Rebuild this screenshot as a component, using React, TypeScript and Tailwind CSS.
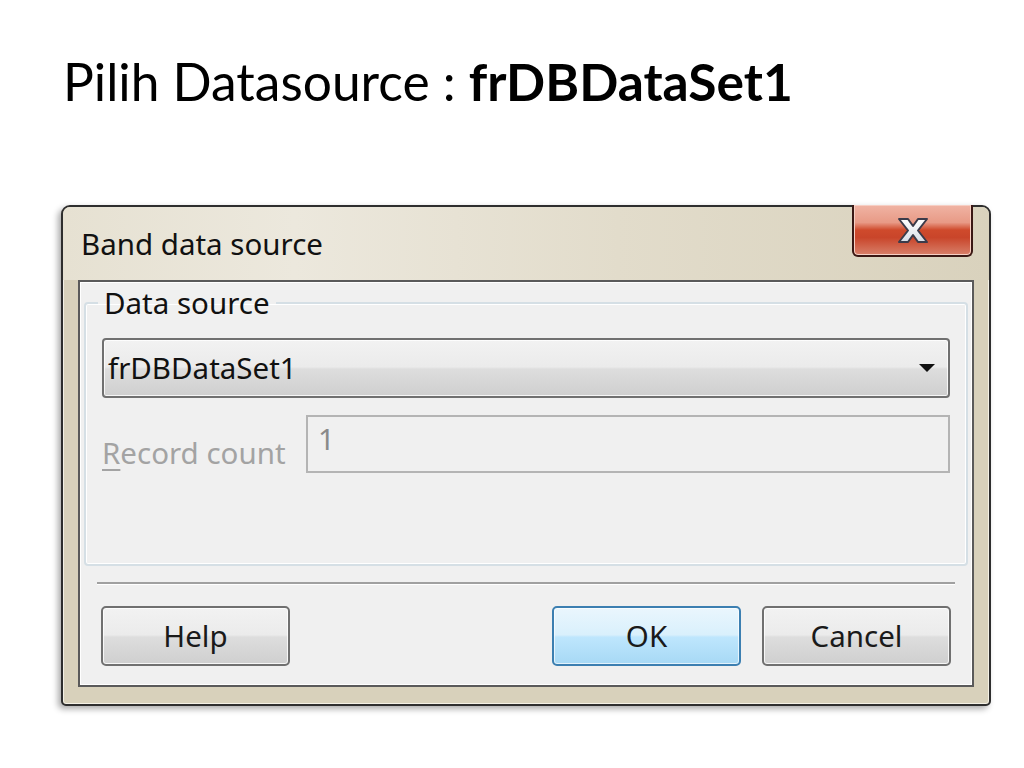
import React from "react";

const ui = { fontFamily: '"Noto Sans", "Open Sans", sans-serif' };

function Btn({ label, primary }: { label: string; primary?: boolean }) {
  return (
    <div
      className={
        "w-[189px] h-[60px] rounded-[5px] border-2 flex items-center justify-center text-[29.5px] text-[#1a1a1a] " +
        (primary
          ? "border-[#3c7fb1] bg-[linear-gradient(#eaf6fd_0%,#d9f0fc_48%,#bee6fd_52%,#a7d9f5_100%)] shadow-[inset_0_0_0_1px_#ffffffaa]"
          : "border-[#707070] bg-[linear-gradient(#f2f2f2_0%,#ebebeb_48%,#dddddd_52%,#cfcfcf_100%)] shadow-[inset_0_0_0_1px_#ffffffcc]")
      }
      style={ui}
    >
      {label}
    </div>
  );
}

export default function App() {
  return (
    <div className="w-[1024px] h-[768px] bg-white overflow-hidden">
      <div
        className="pl-[63px] pt-[51px] text-[51.5px] leading-[60px] tracking-[0px] text-black whitespace-nowrap"
        style={{ fontFamily: 'Lato, "Noto Sans", sans-serif' }}
      >
        Pilih Datasource : <b className="font-bold">frDBDataSet1</b>
      </div>

      {/* Dialog window */}
      <div className="ml-[61px] mt-[94px] w-[930px] h-[501px] rounded-t-[9px] rounded-b-[5px] border-2 border-[#2e2e2e] bg-[#d8d1bb] shadow-[inset_0_0_0_1px_#f4f1e6,-3px_3px_6px_#00000055] flex flex-col">
        {/* title bar */}
        <div className="h-[73px] shrink-0 flex items-start rounded-t-[7px] bg-[linear-gradient(90deg,#e6e1d2_0%,#ece8dd_25%,#e2dccb_60%,#d9d2bd_100%)]">
          <div className="pl-[18px] pt-[19px] text-[29.5px] leading-[36px] text-[#111]" style={ui}>
            Band data source
          </div>
          <div className="ml-auto mr-[16px] w-[121px] h-[52px] -mt-[2px] rounded-b-[6px] border-2 border-t-0 border-[#3a1814] bg-[linear-gradient(#f0b4a4_0%,#e89a86_35%,#cf4a2c_50%,#c9452a_65%,#d8806a_100%)] shadow-[inset_0_0_0_1px_#f7cfc4] flex items-center justify-center">
            <svg width="32" height="27" viewBox="0 0 32 27">
              <defs>
                <linearGradient id="xg" x1="0" y1="0" x2="0" y2="1">
                  <stop offset="0" stopColor="#ffffff" />
                  <stop offset="1" stopColor="#d8dde6" />
                </linearGradient>
              </defs>
              <polygon
                points="2,2 11,2 16,9 21,2 30,2 21,13.5 30,25 21,25 16,18 11,25 2,25 11,13.5"
                fill="url(#xg)"
                stroke="#3b3b4a"
                strokeWidth="2"
                strokeLinejoin="round"
              />
            </svg>
          </div>
        </div>
        {/* body with frame */}
        <div className="flex-1 px-[15px] pb-[17px]">
          <div className="h-full border-2 border-[#5a5a5a] bg-[#f0f0f0] shadow-[inset_0_0_0_1px_#ffffff] pt-[7px] px-[3px] flex flex-col" style={ui}>
            <fieldset className="h-[277px] mx-[1px] border-2 border-[#d5dfe5] rounded-[4px] shadow-[inset_0_0_0_1px_#ffffff] px-[16px] pt-[21px]">
              <legend className="-ml-[4px] px-[6px] text-[29.5px] leading-[28px] text-[#111]">Data source</legend>
              <div className="h-[60px] rounded-[4px] border-2 border-[#707070] bg-[linear-gradient(#f2f2f2_0%,#ebebeb_48%,#dddddd_52%,#cfcfcf_100%)] shadow-[inset_0_0_0_1px_#ffffffcc] flex items-center pl-[4px] pr-[12px]">
                <span className="text-[29.5px] text-[#111]">frDBDataSet1</span>
                <svg className="ml-auto" width="18" height="10" viewBox="0 0 18 10">
                  <polygon points="1,1 17,1 9,9" fill="#111" />
                </svg>
              </div>
              <div className="mt-[17px] flex items-start">
                <span className="text-[29.5px] leading-[40px] text-[#a3a3a3] w-[204px] pt-[18px]">
                  <span className="underline underline-offset-[5px]">R</span>ecord count
                </span>
                <div className="flex-1 h-[58px] border-2 border-[#b4b4b4] bg-[#f0f0f0] flex items-start pl-[10px] pt-[4px]">
                  <span className="text-[29.5px] leading-[36px] text-[#8a8a8a]">1</span>
                </div>
              </div>
            </fieldset>
            <div className="mt-[16px] mx-[14px] h-[3px] border-t-2 border-[#a0a0a0] border-b border-b-white" />
            <div className="mt-[21px] px-[18px] flex items-center">
              <Btn label="Help" />
              <div className="ml-auto flex gap-[21px]">
                <Btn label="OK" primary />
                <Btn label="Cancel" />
              </div>
            </div>
          </div>
        </div>
      </div>
    </div>
  );
}
